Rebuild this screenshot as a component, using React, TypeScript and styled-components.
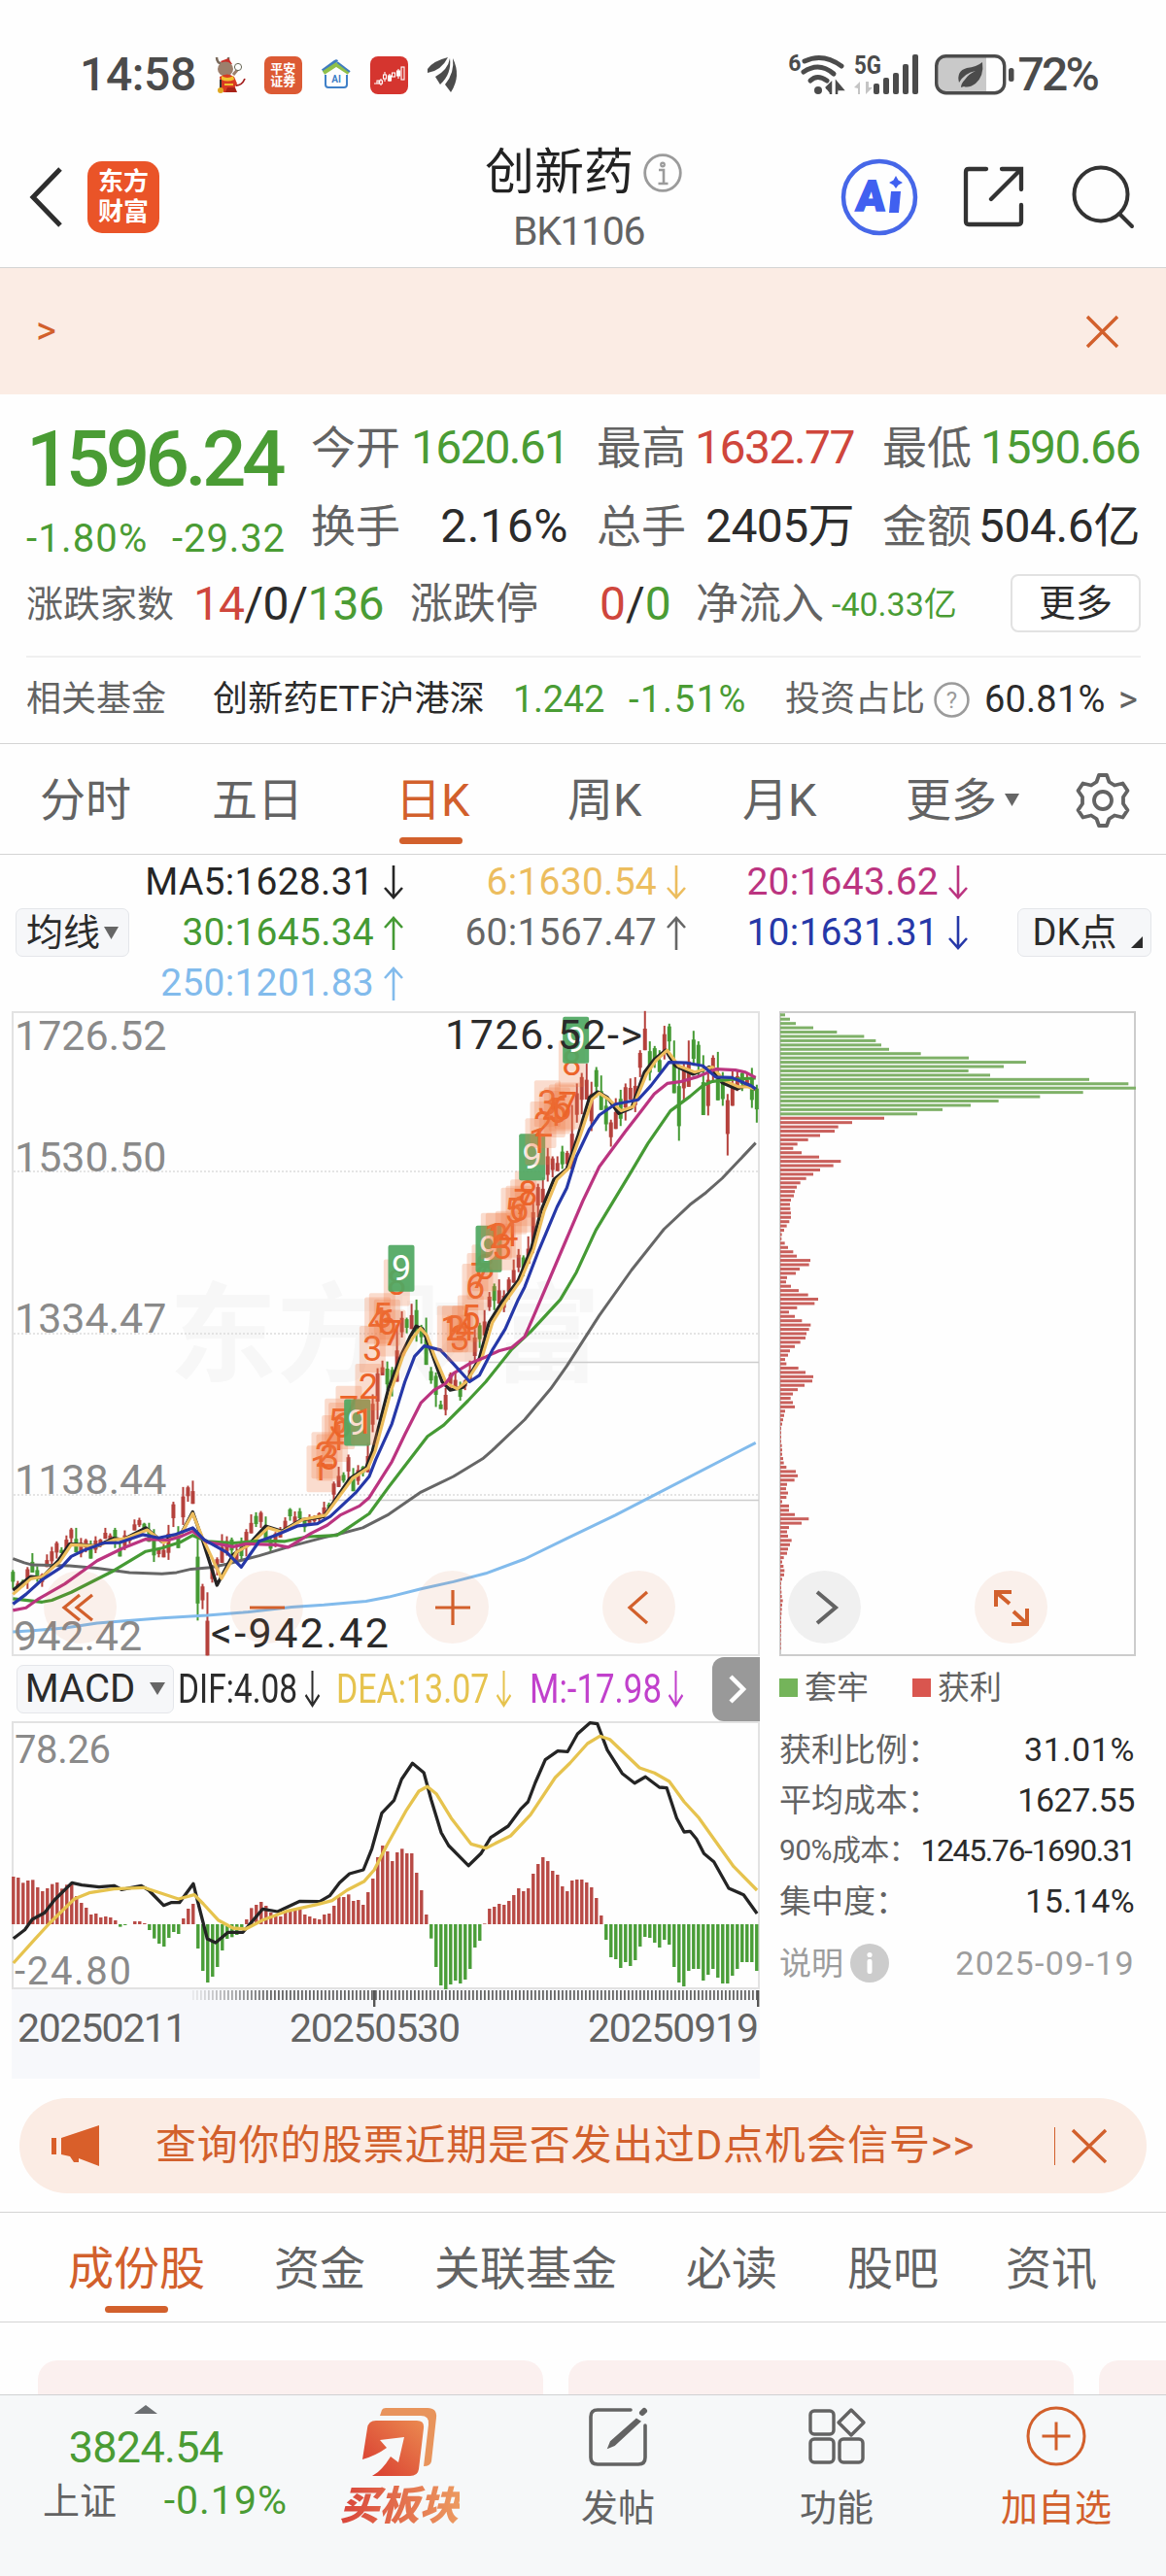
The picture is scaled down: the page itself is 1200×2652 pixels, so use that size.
import React from "react";
import styled, { createGlobalStyle } from "styled-components";

const ORANGE = "#d2602c";
const GREEN = "#4a9c34";
const RED = "#cf463c";
const DARK = "#2b2b2b";
const GRAY = "#636363";

const GlobalStyle = createGlobalStyle`
  * {
    box-sizing: border-box;
  }
  body {
    margin: 0;
    background: #fefefe;
    font-family: Roboto, "Noto Sans CJK SC", sans-serif;
    color: ${DARK};
  }
  svg {
    display: block;
    flex-shrink: 0;
    overflow: visible;
  }
`;

const Page = styled.div`
  width: 1200px;
  height: 2652px;
  overflow: hidden;
  display: flex;
  flex-direction: column;
`;

const Text = styled.span<{ $s: number; $c?: string; $ls?: number; $w?: number }>`
  display: block;
  white-space: nowrap;
  line-height: 1;
  font-size: ${({ $s }) => $s}px;
  color: ${({ $c }) => $c || DARK};
  letter-spacing: ${({ $ls }) => $ls || 0}px;
  font-weight: ${({ $w }) => $w || 400};
`;

/* ---------- status bar ---------- */

const StatusBar = styled.div`
  height: 154px;
  flex-shrink: 0;
  display: flex;
  justify-content: space-between;
  align-items: center;
  padding: 0 71px 0 82px;
`;

const StatusGroup = styled.div`
  display: flex;
  align-items: center;
`;

const AppIcons = styled.div`
  display: flex;
  align-items: center;
  gap: 19px;
  margin-left: 19px;
`;

const AppTile = styled.div`
  width: 39px;
  height: 39px;
  border-radius: 7px;
  background: #dc5a34;
  color: #fff;
  font-size: 13px;
  line-height: 13px;
  font-weight: 700;
  display: flex;
  align-items: center;
  justify-content: center;
  text-align: center;
`;

const WifiMark = styled.span`
  margin-bottom: 24px;
  font-size: 23px;
  line-height: 1;
  font-weight: 700;
  color: #4b4b4b;
`;

const SignalBox = styled.div`
  margin: 0 13px 0 9px;
`;

const Percent = styled(Text)`
  margin-left: 2px;
`;

/* ---------- header ---------- */

const Header = styled.header`
  height: 122px;
  flex-shrink: 0;
  display: grid;
  grid-template-columns: 60px 409px 367px 125px 114px 66px;
  grid-template-rows: 98px;
  align-items: center;
  padding: 0 0 0 30px;
  border-bottom: 1px solid #d4d4d4;
`;

const Logo = styled.div`
  width: 74px;
  height: 74px;
  border-radius: 15px;
  background: #ea5428;
  color: #fff;
  font-size: 26px;
  font-weight: 700;
  line-height: 31px;
  display: flex;
  align-items: center;
  justify-content: center;
  text-align: center;
`;

const TitleBox = styled.div`
  align-self: start;
  margin-top: -2px;
`;

const TitleRow = styled.div`
  display: flex;
  align-items: center;
  gap: 10px;
  margin-bottom: 15px;
`;

const Code = styled(Text)`
  padding-left: 29px;
`;

const Notice = styled.div`
  height: 130px;
  flex-shrink: 0;
  background: #fbece4;
  display: flex;
  align-items: center;
  justify-content: space-between;
  padding: 0 49px 0 37px;
`;

/* ---------- quote ---------- */

const Quote = styled.section`
  height: 360px;
  flex-shrink: 0;
  padding: 14px 26px 0 27px;
  border-bottom: 1px solid #d4d4d4;
`;

const QuoteTop = styled.div`
  display: flex;
  height: 163px;
`;

const PriceBox = styled.div`
  width: 293px;
  padding-top: 13px;
`;

const Changes = styled.div`
  display: flex;
  justify-content: space-between;
  width: 267px;
  margin-top: 22px;
`;

const StatGrid = styled.div`
  display: grid;
  grid-template-columns: repeat(3, 265px);
  grid-auto-rows: 81px;
  column-gap: 29px;
`;

const Stat = styled.div`
  display: flex;
  align-items: center;
  justify-content: space-between;
`;

const StatRow = styled.div`
  height: 92px;
  display: grid;
  grid-template-columns: 172px 223px 195px 99px 140px 184px 134px;
  align-items: center;
  padding-bottom: 14px;
`;

const Parts = styled.div<{ $gap?: number }>`
  display: flex;
  align-items: center;
  gap: ${({ $gap }) => $gap || 0}px;
`;

const MoreButton = styled.button`
  width: 134px;
  height: 60px;
  margin-top: -2px;
  padding: 0;
  border: 2px solid #e2e2e2;
  border-radius: 8px;
  background: #fff;
  display: flex;
  align-items: center;
  justify-content: center;
  font-family: inherit;
`;

const FundRow = styled.div`
  height: 88px;
  display: grid;
  grid-template-columns: 192px 309px 119px 161px 153px 52px 138px 22px;
  align-items: center;
  border-top: 2px solid #f0f0f0;
`;

/* ---------- period tabs ---------- */

const PeriodTabs = styled.nav`
  height: 114px;
  flex-shrink: 0;
  display: grid;
  grid-template-columns: 177px 189px 177px 180px 168px 174px 60px;
  align-items: center;
  padding: 2px 0 0 41px;
  border-bottom: 1px solid #d4d4d4;
`;

const Tab = styled.div<{ $active?: boolean; $bar?: number }>`
  position: relative;
  display: flex;
  align-items: center;
  gap: 8px;
  width: max-content;
  font-size: 47px;
  line-height: 1;
  white-space: nowrap;
  color: ${({ $active }) => ($active ? ORANGE : GRAY)};

  &::after {
    content: "";
    display: ${({ $active }) => ($active ? "block" : "none")};
    position: absolute;
    left: ${({ $bar }) => $bar || 0}px;
    top: 62px;
    width: 65px;
    height: 7px;
    border-radius: 4px;
    background: ${ORANGE};
  }
`;

/* ---------- moving averages ---------- */

const MaPanel = styled.div`
  height: 161px;
  flex-shrink: 0;
  display: flex;
  align-items: flex-start;
  padding: 2px 0 0 16px;
`;

const MaGrid = styled.div`
  display: grid;
  grid-template-columns: 283px 291px 290px;
  grid-auto-rows: 52px;
`;

const MaItem = styled.div`
  display: flex;
  align-items: center;
  justify-content: flex-end;
  gap: 9px;
`;

const Chip = styled.div<{ $w: number }>`
  position: relative;
  width: ${({ $w }) => $w}px;
  height: 50px;
  flex-shrink: 0;
  display: flex;
  align-items: center;
  justify-content: center;
  gap: 4px;
  border: 1px solid #e4e6ea;
  border-radius: 7px;
  background: #f6f7f9;
`;

const MaChip = styled(Chip)`
  margin-top: 53px;
`;

const DkChip = styled(MaChip)`
  margin-left: 50px;
  padding-right: 20px;
`;

const MacdChip = styled(Chip)`
  gap: 15px;
`;

const Corner = styled.i`
  position: absolute;
  right: 8px;
  bottom: 8px;
  border-left: 12px solid transparent;
  border-bottom: 12px solid ${DARK};
`;

/* ---------- charts ---------- */

const Charts = styled.section`
  height: 1100px;
  flex-shrink: 0;
  display: flex;
  padding-left: 12px;
`;

const LeftColumn = styled.div`
  width: 770px;
`;

const RightColumn = styled.div`
  width: 367px;
  margin-left: 20px;
`;

const Plot = styled.div<{ $h: number; $line: string }>`
  position: relative;
  height: ${({ $h }) => $h}px;
  border: 2px solid ${({ $line }) => $line};

  > svg {
    margin: -2px;
  }
`;

const RoundButton = styled.button<{ $x: number; $gray?: boolean }>`
  position: absolute;
  left: ${({ $x }) => $x}px;
  top: 574px;
  width: 75px;
  height: 75px;
  padding: 0;
  border: none;
  border-radius: 50%;
  background: ${({ $gray }) => ($gray ? "rgba(0,0,0,.055)" : "rgba(210,96,44,.09)")};
  display: flex;
  align-items: center;
  justify-content: center;
`;

const IndicatorRow = styled.div`
  height: 67px;
  display: grid;
  grid-template-columns: 166px 163px 199px 188px 49px;
  padding-left: 5px;
  align-items: center;
`;

const Indicator = styled.div`
  display: flex;
  align-items: center;
`;

/* condensed figures, so that the three values fit on one line */
const Squeeze = styled.div<{ $w: number; $k: number }>`
  width: ${({ $w }) => $w}px;

  > span {
    transform: scaleX(${({ $k }) => $k});
    transform-origin: left center;
  }
`;

const NextButton = styled.button`
  height: 66px;
  width: 49px;
  padding: 0;
  border: none;
  border-radius: 12px 0 0 12px;
  background: #999;
  display: flex;
  align-items: center;
  justify-content: center;
`;

const Axis = styled.div`
  height: 92px;
  background: #f7f8fb;
`;

const AxisLabels = styled.div`
  display: grid;
  grid-template-columns: 280px 307px auto;
  padding: 1px 0 0 6px;
`;

const Legend = styled.div`
  height: 64px;
  display: grid;
  grid-template-columns: 137px 137px;
  align-items: center;
`;

const LegendItem = styled.div<{ $c: string }>`
  display: flex;
  align-items: center;
  gap: 7px;

  &::before {
    content: "";
    width: 19px;
    height: 19px;
    background: ${({ $c }) => $c};
  }
`;

const CostList = styled.div`
  padding-top: 6px;
`;

const CostRow = styled.div<{ $h?: number }>`
  height: ${({ $h }) => $h || 52}px;
  width: 366px;
  display: flex;
  align-items: center;
  justify-content: space-between;
`;

/* ---------- lower part ---------- */

const Promo = styled.div`
  width: 1160px;
  height: 98px;
  flex-shrink: 0;
  margin: 19px 20px;
  border-radius: 49px;
  background: #fbece4;
  display: grid;
  grid-template-columns: 107px 925px 18px 40px;
  align-items: center;
  padding-left: 33px;
`;

const Separator = styled.i`
  width: 1px;
  height: 39px;
  background: ${ORANGE};
`;

const InfoTabs = styled.nav`
  height: 114px;
  flex-shrink: 0;
  display: grid;
  grid-template-columns: 212px 165px 259px 166px 163px 100px;
  align-items: center;
  padding: 2px 0 0 70px;
  border-top: 1px solid #d4d4d4;
  border-bottom: 1px solid #d4d4d4;
`;

const Cards = styled.div`
  height: 74px;
  flex-shrink: 0;
  overflow: hidden;
  display: flex;
  gap: 26px;
  padding: 39px 0 0 39px;
`;

const Card = styled.div`
  width: 520px;
  height: 80px;
  flex-shrink: 0;
  border-radius: 20px;
  background: #fbf0ef;
`;

const BottomBar = styled.footer`
  height: 187px;
  flex-shrink: 0;
  display: grid;
  grid-template-columns: 300px 224px 224px 226px 226px;
  background: #f6f8f9;
  border-top: 1px solid #cfd1d3;
`;

const IndexBox = styled.div`
  display: flex;
  flex-direction: column;
  align-items: center;
  gap: 12px;
  padding-top: 10px;
`;

const IndexRow = styled.div`
  width: 252px;
  margin: 0 0 0 40px;
  display: flex;
  justify-content: space-between;
  align-items: center;
`;

const Action = styled.div`
  display: flex;
  flex-direction: column;
  align-items: center;
  padding-top: 12px;
`;

const IconSlot = styled.div`
  height: 85px;
`;

const BuyLabel = styled.span`
  font-size: 41px;
  line-height: 42px;
  margin: -4px 2px 0 0;
  font-weight: 900;
  font-style: italic;
  background: linear-gradient(90deg, #d9443a, #ec9a60);
  -webkit-background-clip: text;
  color: transparent;
`;

/* ---------- chart data ---------- */

type Pt = [number, number];

const px = (v: number) => v / 3 - 12;
const py = (v: number) => v / 2.306 - 11;

const ma5: Pt[] = [
  [40, 1400], [95, 1368], [130, 1370], [180, 1330], [215, 1290], [300, 1295], [350, 1277], [380, 1280],
  [450, 1252], [500, 1285], [560, 1265], [595, 1214], [625, 1280], [670, 1388], [720, 1315], [770, 1290],
  [820, 1248], [870, 1260], [930, 1233], [1000, 1225], [1080, 1135], [1130, 1110], [1150, 1070], [1200, 920],
  [1240, 840], [1265, 800], [1285, 773], [1305, 780], [1330, 830], [1365, 905], [1390, 925], [1430, 918],
  [1480, 850], [1510, 765], [1550, 715], [1600, 665], [1640, 590], [1670, 500], [1710, 425], [1750, 400],
  [1785, 320], [1820, 230], [1845, 217], [1875, 230], [1910, 268], [1950, 255], [1990, 170], [2020, 140],
  [2055, 118], [2085, 155], [2140, 175], [2190, 158], [2230, 195], [2275, 210], [2310, 200], [2333, 212],
];
const ma6: Pt[] = [
  [40, 1410], [95, 1373], [130, 1368], [185, 1332], [220, 1292], [300, 1295], [355, 1280], [385, 1278],
  [455, 1257], [505, 1287], [560, 1265], [595, 1218], [625, 1275], [684, 1372], [730, 1310], [775, 1290],
  [828, 1252], [870, 1262], [935, 1232], [1005, 1222], [1088, 1135], [1136, 1110], [1158, 1070], [1206, 930],
  [1246, 840], [1275, 800], [1298, 778], [1318, 795], [1342, 845], [1378, 908], [1412, 922], [1440, 905],
  [1488, 848], [1520, 765], [1558, 718], [1607, 665], [1648, 590], [1680, 500], [1720, 425], [1756, 398],
  [1792, 320], [1828, 235], [1850, 220], [1880, 235], [1918, 262], [1955, 252], [1996, 175], [2026, 142],
  [2060, 118], [2095, 155], [2145, 170], [2200, 158], [2236, 190], [2280, 205], [2310, 205], [2333, 210],
];
const ma10: Pt[] = [
  [40, 1433], [80, 1410], [130, 1375], [190, 1345], [220, 1320], [260, 1305], [320, 1288], [370, 1287],
  [440, 1268], [490, 1276], [540, 1268], [595, 1252], [630, 1280], [700, 1310], [745, 1345], [800, 1284],
  [850, 1270], [920, 1247], [980, 1242], [1020, 1225], [1100, 1167], [1140, 1130], [1160, 1090], [1210, 1005],
  [1250, 905], [1280, 845], [1310, 820], [1360, 830], [1400, 863], [1450, 905], [1480, 890], [1520, 830],
  [1560, 780], [1600, 710], [1620, 680], [1660, 600], [1720, 490], [1750, 445], [1780, 370], [1820, 305],
  [1850, 272], [1900, 246], [1970, 236], [2010, 202], [2065, 147], [2120, 148], [2170, 155], [2210, 182],
  [2260, 183], [2320, 203], [2333, 210],
];
const ma20: Pt[] = [
  [40, 1448], [80, 1442], [120, 1420], [200, 1385], [300, 1330], [380, 1300], [450, 1279], [520, 1281],
  [560, 1272], [595, 1260], [640, 1286], [720, 1297], [760, 1290], [850, 1292], [890, 1298], [960, 1265],
  [1010, 1246], [1050, 1222], [1110, 1200], [1140, 1180], [1210, 1095], [1250, 1030], [1300, 955], [1340, 925],
  [1375, 910], [1400, 885], [1450, 862], [1500, 846], [1540, 832], [1580, 824], [1620, 798], [1650, 745],
  [1700, 655], [1750, 565], [1800, 475], [1850, 395], [1930, 312], [1970, 272], [2020, 222], [2060, 197],
  [2100, 193], [2150, 182], [2210, 163], [2270, 165], [2300, 170], [2333, 183],
];
const ma30: Pt[] = [
  [40, 1420], [130, 1428], [160, 1424], [220, 1405], [350, 1354], [450, 1308], [500, 1300], [560, 1285],
  [595, 1270], [640, 1284], [720, 1288], [800, 1283], [880, 1284], [950, 1273], [1040, 1270], [1060, 1260],
  [1140, 1218], [1200, 1155], [1240, 1115], [1320, 1035], [1370, 1008], [1445, 950], [1500, 905], [1580, 828],
  [1640, 785], [1730, 710], [1780, 645], [1840, 545], [1950, 405], [2000, 340], [2070, 262], [2130, 228],
  [2170, 202], [2200, 192], [2250, 188], [2333, 184],
];
const ma60: Pt[] = [
  [40, 1325], [75, 1335], [100, 1340], [215, 1342], [300, 1348], [400, 1358], [500, 1361], [545, 1358],
  [590, 1350], [650, 1346], [700, 1338], [800, 1318], [900, 1295], [1000, 1275], [1050, 1266], [1120, 1252],
  [1200, 1220], [1300, 1167], [1400, 1130], [1490, 1088], [1520, 1068], [1620, 995], [1700, 922], [1750, 868],
  [1850, 748], [1950, 640], [2050, 543], [2130, 485], [2180, 456], [2230, 422], [2333, 338],
];
const ma250: Pt[] = [
  [40, 1499], [100, 1496], [200, 1490], [300, 1478], [500, 1466], [640, 1460], [750, 1453], [900, 1440],
  [1000, 1435], [1130, 1426], [1200, 1416], [1300, 1397], [1400, 1380], [1500, 1360], [1620, 1326],
  [1750, 1277], [1900, 1222], [2333, 1050],
];

const maLines: { pts: Pt[]; color: string; w: number }[] = [
  { pts: ma250, color: "#82bbec", w: 3 },
  { pts: ma60, color: "#666", w: 3 },
  { pts: ma5, color: "#242424", w: 3.4 },
  { pts: ma6, color: "#edbd5c", w: 3.2 },
  { pts: ma30, color: "#459a34", w: 3.2 },
  { pts: ma20, color: "#bb3480", w: 3.2 },
  { pts: ma10, color: "#2638a8", w: 3.2 },
];

// high,low per day; a leading "g" marks a falling day
const candles =
  "g1352,1395 1378,1392 g1375,1393 1345,1397 g1312,1358 g1343,1380 1360,1392 1315,1345 1297,1340 1284,1325 g1298,1312 1270,1310 1252,1290 g1252,1310 1276,1322 1278,1310 g1282,1325 1272,1312 1278,1298 1252,1278 1265,1285 g1252,1300 g1285,1320 1258,1305 1270,1290 1232,1258 1228,1250 g1240,1262 g1240,1285 g1255,1333 1300,1322 1290,1322 1245,1328 1190,1250 g1248,1300 1155,1245 1152,1190 1140,1195 g1270,1472 1385,1445 1405,1555 1340,1382 1322,1365 1267,1335 1272,1318 g1275,1322 1290,1330 g1275,1330 1255,1320 1220,1265 g1215,1250 1212,1252 g1225,1280 g1275,1308 1262,1298 1250,1275 1227,1260 g1205,1235 1213,1240 g1205,1235 g1230,1262 1220,1240 1222,1240 1215,1240 1190,1220 g1192,1210 1142,1190 1107,1155 g1120,1145 1078,1140 g1110,1165 1103,1150 g1105,1130 1050,1120 935,1025 873,995 855,890 g857,925 g870,940 770,905 738,800 g753,790 720,780 g710,810 g770,815 g753,865 g870,910 g883,965 g950,970 920,985 883,925 885,920 g905,950 900,925 855,905 780,860 g765,825 735,795 692,737 g672,735 662,720 688,740 657,710 615,670 590,645 g605,655 560,625 470,600 435,515 420,480 350,430 370,420 370,405 g345,400 357,405 248,400 197,290 172,270 150,235 193,310 g158,230 g178,260 g230,310 283,347 232,305 g212,298 197,285 185,235 182,265 118,182 25,118 g97,190 g108,160 g118,170 60,140 g55,120 g95,220 g160,333 150,240 95,205 g72,155 g97,180 g130,272 160,273 130,190 g122,237 g170,250 222,368 165,250 168,215 g168,215 175,205 g160,255 g200,290".split(
    " "
  );

// consecutive-day counters above the candles
const counters: [number, number, number][] = [
  [1, 987, 1112], [2, 1002, 1080], [3, 1017, 1085], [4, 1034, 1040], [5, 1043, 1000], [6, 1055, 1010], [7, 1077, 970],
  [9, 1103, 1002], [1, 1124, 1000], [2, 1137, 918], [3, 1150, 828], [4, 1166, 760], [5, 1180, 750], [6, 1195, 765],
  [7, 1212, 790], [8, 1225, 670], [9, 1239, 636], [1, 1390, 780], [2, 1405, 780], [3, 1420, 802], [4, 1436, 780],
  [5, 1453, 755], [6, 1467, 680], [7, 1482, 655], [8, 1497, 635], [9, 1509, 590], [1, 1525, 560], [2, 1540, 560],
  [3, 1552, 585], [4, 1570, 555], [5, 1587, 500], [6, 1602, 495], [7, 1616, 480], [8, 1630, 460], [9, 1643, 372],
  [1, 1662, 335], [2, 1677, 295], [3, 1690, 245], [4, 1705, 270], [5, 1720, 262], [6, 1735, 255], [7, 1753, 250],
  [8, 1765, 150], [9, 1778, 94],
];

const chips = [
  15, 30, 48, 102, 175, 259, 295, 312, 336, 434, 582, 759, 690, 581, 648, 954, 1075, 1098, 935, 802, 674, 588, 501,
  423, 321, 222, 179, 168, 123, 86, 53, 40, 66, 120, 187, 164, 123, 102, 80, 62, 51, 45, 42, 33, 30, 31, 33, 33, 28,
  20, 12, 5, 4, 14, 24, 40, 51, 93, 89, 60, 48, 21, 18, 33, 57, 86, 117, 106, 52, 27, 45, 67, 94, 89, 81, 78, 62, 45,
  30, 24, 15, 19, 56, 78, 102, 99, 75, 54, 39, 32, 39, 45, 15, 12, 9, 6, 3, 3, 3, 3, 5, 6, 6, 9, 11, 19, 48, 54, 44,
  21, 18, 24, 19, 6, 27, 27, 45, 88, 66, 27, 21, 24, 35, 30, 24, 21, 11, 6, 10, 13, 12, 6, 3, 3, 4, 5, 8, 6, 5, 4, 3,
  3, 3, 3, 2, 2, 2, 2,
];

const macdBars = [
  147, 144, 128, 135, 137, 114, 102, 111, 124, 129, 110, 122, 125, 87, 66, 51, 30, 33, 21, 24, 21, 12, -8, -3, 0, 9, 9,
  3, -18, -44, -60, -69, -42, -24, -30, 18, 48, 63, -75, -144, -180, -162, -132, -81, -45, -40, -33, -15, 15, 50, 60,
  69, 57, 36, 24, 24, 36, 40, 45, 45, 30, 24, 18, 15, 30, 33, 57, 84, 84, 92, 72, 75, 60, 99, 141, 207, 243, 225, 195,
  222, 233, 219, 219, 159, 105, 30, -44, -132, -189, -201, -186, -174, -183, -171, -138, -72, -51, 2, 48, 54, 63, 60,
  72, 90, 111, 102, 111, 156, 186, 207, 195, 165, 153, 117, 102, 135, 138, 138, 129, 114, 81, 27, -48, -102, -108,
  -135, -117, -129, -111, -69, -39, -42, -57, -72, -48, -63, -132, -180, -192, -144, -138, -138, -174, -156, -138,
  -165, -183, -183, -159, -138, -117, -117, -117, -144,
];

const dif: Pt[] = [
  [27, 917], [50, 890], [65, 858], [90, 838], [110, 798], [145, 745], [165, 752], [200, 758], [230, 754], [245, 766],
  [285, 754], [300, 768], [330, 815], [345, 806], [362, 806], [390, 748], [400, 810], [418, 918], [435, 930],
  [460, 898], [490, 898], [530, 826], [560, 834], [605, 802], [645, 803], [665, 785], [685, 745], [705, 717],
  [733, 705], [750, 640], [770, 530], [795, 490], [810, 425], [832, 376], [855, 405], [870, 490], [890, 590],
  [905, 630], [945, 692], [970, 655], [990, 605], [1025, 570], [1050, 518], [1065, 495], [1080, 435], [1100, 365],
  [1125, 338], [1145, 340], [1165, 285], [1190, 251], [1205, 254], [1225, 335], [1255, 407], [1280, 437],
  [1302, 418], [1330, 450], [1345, 452], [1365, 545], [1380, 588], [1392, 586], [1405, 610], [1420, 655],
  [1440, 680], [1470, 762], [1500, 782], [1527, 840],
];
const dea: Pt[] = [
  [27, 993], [70, 920], [100, 870], [150, 795], [180, 776], [230, 764], [290, 760], [320, 775], [360, 795],
  [392, 782], [410, 810], [440, 860], [470, 885], [495, 888], [530, 860], [580, 832], [640, 812], [670, 800],
  [700, 768], [735, 740], [755, 705], [780, 630], [820, 520], [845, 462], [862, 448], [880, 470], [910, 545],
  [950, 625], [980, 638], [1030, 600], [1070, 535], [1120, 420], [1150, 375], [1185, 315], [1210, 292],
  [1230, 302], [1290, 390], [1320, 406], [1350, 432], [1380, 495], [1410, 545], [1440, 610], [1480, 695],
  [1527, 768],
];

const mx = (v: number) => v / 1.96 - 12;
const my = (v: number) => v / 3 - 82;
const toPoints = (pts: Pt[], fx: (v: number) => number, fy: (v: number) => number) =>
  pts.map(([x, y]) => `${fx(x).toFixed(1)},${fy(y).toFixed(1)}`).join(" ");

const CandleChart = () => (
  <svg width="770" height="664" fontFamily="Roboto, 'Noto Sans CJK SC', sans-serif">
    <text x="162" y="373" fontSize="111" fontWeight="700" fill="#f7f7f7">
      东方财富
    </text>
    {[165, 332, 498].map((y) => (
      <line key={y} x1="2" x2="768" y1={y} y2={y} stroke="#dcdcdc" strokeWidth="1.5" strokeDasharray="2 2" />
    ))}
    <line x1="488" x2="769" y1="361.5" y2="361.5" stroke="#ccc" strokeWidth="1.5" />
    <line x1="327" x2="769" y1="503.5" y2="503.5" stroke="#ccc" strokeWidth="1.5" />
    {candles.map((c, i) => {
      const down = c[0] === "g";
      const [hi, lo] = (down ? c.slice(1) : c).split(",").map(Number);
      const x = px(40 + i * 15.01);
      const top = py(hi);
      const h = py(lo) - top;
      const bodyTop = top + h * (i % 3 === 0 ? 0.1 : i % 3 === 1 ? 0.45 : 0.25);
      return (
        <g key={i} fill={down ? "#459a34" : "#b5413c"}>
          <rect x={x - 1} y={top} width="2" height={h} />
          <rect x={x - 2} y={bodyTop} width="4" height={h * 0.55} />
        </g>
      );
    })}
    {maLines.map((l) => (
      <polyline
        key={l.color}
        points={toPoints(l.pts, px, py)}
        fill="none"
        stroke={l.color}
        strokeWidth={l.w}
        strokeLinejoin="round"
      />
    ))}
    {counters.map(([n, x, y], i) => (
      <g key={i}>
        <rect
          x={px(x) - 13.5}
          y={py(y) - 24}
          width="27"
          height="48"
          rx="2"
          fill={n === 9 ? "#50a862" : "#f07a45"}
          opacity={n === 9 ? 0.93 : 0.26}
        />
        <text x={px(x)} y={py(y) + 12} fontSize="36" textAnchor="middle" fill={n === 9 ? "#fff" : "#ec6329"}>
          {n}
        </text>
      </g>
    ))}
    <g fontSize="43" fill="#8a8a8a">
      <text x="3" y="40">1726.52</text>
      <text x="3" y="165">1530.50</text>
      <text x="3" y="331">1334.47</text>
      <text x="3" y="497">1138.44</text>
      <text x="2" y="658">942.42</text>
    </g>
    <g fontSize="43" fill={DARK}>
      <text x="446" y="39" textLength="203">1726.52-&gt;</text>
      <text x="205" y="655" textLength="183">&lt;-942.42</text>
    </g>
  </svg>
);

const ChipChart = () => (
  <svg width="367" height="664">
    {chips.map((v, i) => (
      <rect key={i} x="1" y={2.3 + i * 4.435} width={v / 3} height="3" fill={i < 24 ? "#7fb168" : "#c9605c"} />
    ))}
  </svg>
);

const MacdChart = () => (
  <svg width="770" height="276" fontFamily="Roboto, sans-serif">
    <g fontSize="40" fill="#8a8a8a">
      <text x="3" y="43" textLength="99">78.26</text>
      <text x="3" y="271" textLength="120">-24.80</text>
    </g>
    {macdBars.map((v, i) => (
      <rect
        key={i}
        x={mx(27 + i * 9.8) - 1.7}
        y={v > 0 ? 209 - v / 3 : 209}
        width="3.4"
        height={Math.abs(v) / 3}
        fill={v > 0 ? "#b84a45" : "#4a9e38"}
      />
    ))}
    <polyline points={toPoints(dif, mx, my)} fill="none" stroke="#242424" strokeWidth="3.3" strokeLinejoin="round" />
    <polyline points={toPoints(dea, mx, my)} fill="none" stroke="#e6c34e" strokeWidth="3.3" strokeLinejoin="round" />
  </svg>
);

const Ruler = () => (
  <svg width="770" height="19">
    {Array.from({ length: 146 }, (_, i) => (
      <rect
        key={i}
        x={186 + i * 4}
        y="1"
        width="1.8"
        height="10"
        fill="#666"
        opacity={Math.min(1, 0.1 + i / 22)}
      />
    ))}
    <rect x="372" y="1" width="2.4" height="17" fill="#555" />
    <rect x="767" y="1" width="2.4" height="17" fill="#555" />
  </svg>
);

/* ---------- icons ---------- */

const Arrow = ({ up, color, w = 22, h = 35 }: { up?: boolean; color: string; w?: number; h?: number }) => (
  <svg width={w} height={h} viewBox="0 0 22 35" preserveAspectRatio="none" fill="none" stroke={color} strokeWidth="2.6">
    <path d={up ? "M11 35V2M2 12L11 2L20 12" : "M11 0V33M2 23L11 33L20 23"} />
  </svg>
);

const Triangle = ({ w = 15, h = 13 }: { w?: number; h?: number }) => (
  <svg width={w} height={h} viewBox="0 0 10 10" preserveAspectRatio="none">
    <path d="M0 0H10L5 10Z" fill="#666" />
  </svg>
);

const Cross = ({ w, h }: { w: number; h: number }) => (
  <svg width={w} height={h} fill="none" stroke={ORANGE} strokeWidth="3.4">
    <path d={`M1 1L${w - 1} ${h - 1}M${w - 1} 1L1 ${h - 1}`} />
  </svg>
);

const Mascot = () => (
  <svg width="32" height="40" viewBox="0 0 32 40">
    <path d="M2 2q0 6 6 7M14 2q1 5-4 6" stroke="#7a6a5c" strokeWidth="2.5" fill="none" />
    <path d="M6 6l8-3 4 6-8 3z" fill="#c9302a" />
    <ellipse cx="11" cy="14" rx="8" ry="7.5" fill="#9c7f6c" />
    <path d="M5 22q8-5 15 0l3 7-5 9H9l-3-6z" fill="#d83a22" />
    <path d="M7 21q6 4 12 0l1 4q-7 3-13 0zM10 29h9v2h-9z" fill="#f2c230" />
    <path d="M19 20l5-6" stroke="#9c7f6c" strokeWidth="3" />
    <circle cx="24" cy="12" r="3.6" fill="#fff" stroke="#665" strokeWidth="1" />
    <path d="M22 31q6 0 9-7" stroke="#a32020" strokeWidth="1.8" fill="none" />
    <path d="M6 25v12" stroke="#333" strokeWidth="2" />
    <circle cx="6" cy="36" r="3" fill="#e0a820" />
    <path d="M11 38l2-5h8l2 5z" fill="#a82218" />
  </svg>
);

const House = () => (
  <svg width="32" height="30" viewBox="0 0 32 30">
    <path d="M2 11L15 1.5q1-.8 2 0" fill="none" stroke="#3f7cbf" strokeWidth="3.5" />
    <path d="M3 13L16 4.5L29 13" fill="none" stroke="#8fc04a" strokeWidth="4" />
    <path d="M17 2L30 12" fill="none" stroke="#3f7cbf" strokeWidth="2" />
    <path d="M5 15V25q0 3 3 3H24q3 0 3-3V15" fill="none" stroke="#3f80c8" strokeWidth="2" />
    <text x="16" y="23" fontSize="10" fontWeight="700" textAnchor="middle" fill="#3f80c8">
      AI
    </text>
  </svg>
);

const MiniCandles = () => (
  <svg width="39" height="39" viewBox="0 0 39 39">
    <rect width="39" height="39" rx="8" fill="#d5352f" />
    <g stroke="#fff" strokeWidth="1.1" fill="none">
      <path d="M4 28h3v-3h2v3zM11 23v7M15 16v10M20 18v8M29 13v10" />
      <rect x="9.5" y="25" width="3" height="3" fill="#d5352f" />
      <rect x="13.5" y="19" width="3" height="4" fill="#d5352f" />
      <rect x="18.5" y="20" width="3" height="5" fill="#fff" />
      <rect x="22.5" y="17" width="3" height="4" />
      <rect x="27.5" y="15" width="3" height="5" fill="#fff" />
      <rect x="32" y="11" width="3" height="13" />
    </g>
  </svg>
);

const Feather = () => (
  <svg width="34" height="38" viewBox="0 0 34 38" fill="#4c4c4c">
    <path d="M22 1Q6 5 1 13V17Q15 15 22 1Z" />
    <path d="M24 2Q22 14 9 21L14 29Q26 18 24 2Z" />
    <path d="M27 2Q29 17 19 29L25 37Q36 20 27 2Z" />
  </svg>
);

const Wifi = () => (
  <svg width="46" height="42" viewBox="0 0 46 42" fill="none" stroke="#4b4b4b">
    <path d="M4 7Q23-2 42 12" strokeWidth="5" strokeLinecap="round" />
    <path d="M3 18Q19 7 34 20" strokeWidth="5" strokeLinecap="round" />
    <path d="M10 27Q17 20 27 27" strokeWidth="5" strokeLinecap="round" />
    <circle cx="18" cy="37" r="4" fill="#4b4b4b" stroke="none" />
    <path d="M26 35l5-5v11M37 41V29l6 7h-4" fill="#4b4b4b" strokeWidth="2.5" />
  </svg>
);

const Signal = () => (
  <svg width="70" height="42" viewBox="0 0 70 42" fill="#4b4b4b">
    <text x="0" y="20" fontSize="26" fontWeight="700" textLength="28" lengthAdjust="spacingAndGlyphs">
      5G
    </text>
    <path d="M0 34l6-6v13H4V35zM12 28v13l7-7h-4v-6z" fill="#c4c4c4" />
    <rect x="20" y="30" width="6" height="11" rx="2" />
    <rect x="30" y="24" width="6" height="17" rx="2" />
    <rect x="40" y="19" width="6" height="22" rx="2" />
    <rect x="50" y="10" width="6" height="31" rx="2" />
    <rect x="60" y="0" width="6" height="41" rx="2" />
  </svg>
);

const Battery = () => (
  <svg width="83" height="42" viewBox="0 0 83 42">
    <path d="M10 2H53V39H10Q3 39 3 30V11Q3 2 10 2Z" fill="#c9c9c9" />
    <rect x="1.7" y="1.7" width="70" height="38" rx="10" fill="none" stroke="#4b4b4b" strokeWidth="3.4" />
    <rect x="76" y="14" width="5.5" height="14" rx="2.5" fill="#4b4b4b" />
    <path d="M49 8Q51 22 42 30Q35 35 30 33L27 34Q27 30 31 26Q35 20 42 17Q31 19 25 29Q22 17 33 14Q43 13 49 8Z" fill="#4b4b4b" />
  </svg>
);

const AiIcon = () => (
  <svg width="80" height="80" viewBox="0 0 80 80">
    <circle cx="39" cy="40" r="37" fill="none" stroke="#4667e8" strokeWidth="4.5" />
    <text
      x="15"
      y="54"
      fontSize="44"
      fontWeight="900"
      fill="#4060f0"
      stroke="#4060f0"
      strokeWidth="1.5"
      textLength="30"
      lengthAdjust="spacingAndGlyphs"
      transform="skewX(-4) translate(3 0)"
    >
      A
    </text>
    <path d="M51 34h10l-2 22H49z" fill="#4060f0" />
    <path d="M56 18l2.5 4.5L63 25l-4.5 2.5L56 31l-2.5-3.5L49 25l4.5-2.5z" fill="#4060f0" />
  </svg>
);

const ShareIcon = () => (
  <svg width="64" height="64" viewBox="0 0 64 64" fill="none" stroke="#333" strokeWidth="4.3" strokeLinecap="round">
    <path d="M24 3H6Q3 3 3 6V57Q3 60 6 60H57Q60 60 60 57V40M40 3H60V24M59 4L29 34" />
  </svg>
);

const SearchIcon = () => (
  <svg width="66" height="66" viewBox="0 0 66 66" fill="none" stroke="#333" strokeWidth="4" strokeLinecap="round">
    <circle cx="28" cy="30" r="27.5" />
    <path d="M47 50L60 63" />
  </svg>
);

const CircleMark = ({ size, mark, solid }: { size: number; mark: string; solid?: boolean }) => (
  <svg width={size} height={size} viewBox="0 0 40 40">
    <circle
      cx="20"
      cy="20"
      r={solid ? 20 : 18.3}
      fill={solid ? "#ccc" : "none"}
      stroke={solid ? "none" : "#9b9b9b"}
      strokeWidth="2.8"
    />
    {mark === "i" ? (
      <g fill={solid ? "#fff" : "none"} stroke={solid ? "#fff" : "#9b9b9b"} strokeWidth={solid ? 0 : 2.2}>
        <circle cx="20" cy="11.5" r={solid ? 2.6 : 1.8} />
        {solid ? <rect x="17.5" y="16" width="5" height="15" rx="2" /> : <path d="M16 17h5v13M15.5 31h10" strokeWidth="2.6" />}
      </g>
    ) : (
      <text x="20" y="29" fontSize="26" textAnchor="middle" fill="#9b9b9b">
        {mark}
      </text>
    )}
  </svg>
);

const Gear = () => (
  <svg width="58" height="58" viewBox="0 0 58 58" fill="none" stroke="#636363" strokeWidth="3.8" strokeLinejoin="round">
    <path d="M25 3H33L35.5 10L41 13.5L49.5 11.5L54.5 19L50 25.5V32.5L54.5 39L49.5 46.5L41 44.5L35.5 48L33 55H25L22.5 48L17 44.5L8.5 46.5L3.5 39L8 32.5V25.5L3.5 19L8.5 11.5L17 13.5L22.5 10Z" />
    <circle cx="29" cy="29" r="9" />
  </svg>
);

const Horn = () => (
  <svg width="50" height="44" viewBox="0 0 50 44" fill="#d95f2a">
    <path d="M0 14H5V31H0ZM10 14L49 1V43L28 35V39H23L19 33L10 31Z" />
  </svg>
);

const BuyIcon = () => (
  <svg width="78" height="72" viewBox="0 0 78 72">
    <defs>
      <linearGradient id="buy" x1="0" y1="1" x2="1" y2="0">
        <stop offset="0" stopColor="#d8392f" />
        <stop offset="1" stopColor="#eb8a50" />
      </linearGradient>
    </defs>
    <path d="M18 9L20 3Q21 1 24 1H67Q77 1 76 11L71 56Q70 61 63 61L68 18Q69 9 60 9Z" fill="#e8945c" />
    <path
      d="M5 22Q6 14 14 14H56Q64 14 63 22L58 64Q57 71 49 71H10Q20 66 29 51L37 57L43 31L18 34L25 42Q14 50 0 54Z"
      fill="url(#buy)"
    />
  </svg>
);

const PostIcon = () => (
  <svg width="62" height="62" viewBox="0 0 62 62" fill="none" stroke="#636363" strokeWidth="3.6" strokeLinecap="round">
    <path d="M44 3H10Q3 3 3 10V52Q3 59 10 59H52Q59 59 59 52V19" />
    <path d="M50 13L53 15L27 39L22 41L24 36Z" fill="#636363" strokeWidth="2.5" />
    <path d="M56 6L58 4" strokeWidth="6" />
  </svg>
);

const GridIcon = () => (
  <svg width="60" height="60" viewBox="0 0 60 60" fill="none" stroke="#636363" strokeWidth="3.4" strokeLinejoin="round">
    <rect x="3" y="4" width="24" height="24" rx="4" />
    <rect x="3" y="33" width="24" height="24" rx="4" />
    <rect x="33" y="33" width="24" height="24" rx="4" />
    <path d="M45 3L58 16L45 29L32 16Z" />
  </svg>
);

const AddIcon = () => (
  <svg width="62" height="62" viewBox="0 0 62 62" fill="none" stroke={ORANGE} strokeWidth="3">
    <circle cx="31" cy="30" r="29" />
    <path d="M31 15.5V44.5M16.5 30H45.5" />
  </svg>
);

const Stroke = ({ d, w = 40, h = 40, c = ORANGE, sw = 3.2 }: { d: string; w?: number; h?: number; c?: string; sw?: number }) => (
  <svg width={w} height={h} fill="none" stroke={c} strokeWidth={sw}>
    <path d={d} />
  </svg>
);

/* ---------- content ---------- */

const stats = [
  { label: "今开", value: "1620.61", color: GREEN, ls: -1.8 },
  { label: "最高", value: "1632.77", color: RED, ls: -1.5 },
  { label: "最低", value: "1590.66", color: GREEN, ls: -1.5 },
  { label: "换手", value: "2.16%", color: DARK, ls: 0.6 },
  { label: "总手", value: "2405万", color: DARK, ls: -0.6 },
  { label: "金额", value: "504.6亿", color: DARK, ls: -0.4 },
];

const averages = [
  { text: "MA5:1628.31", color: "#262626" },
  { text: "6:1630.54", color: "#ecbd5e" },
  { text: "20:1643.62", color: "#bb3480" },
  { text: "30:1645.34", color: "#459a34", up: true },
  { text: "60:1567.47", color: "#666", up: true },
  { text: "10:1631.31", color: "#2638a8" },
  { text: "250:1201.83", color: "#82bbec", up: true },
];

const costs = [
  { label: "获利比例：", value: "31.01%", ls: 0.6 },
  { label: "平均成本：", value: "1627.55", ls: -0.4 },
  { label: "90%成本：", value: "1245.76-1690.31", ls: -1.4, tight: true },
  { label: "集中度：", value: "15.14%", ls: 0.4 },
];

export default function App() {
  return (
    <Page>
      <GlobalStyle />
      <StatusBar>
        <StatusGroup>
          <Text $s={48} $c="#4b4b4b" $w={500} $ls={-0.4}>14:58</Text>
          <AppIcons>
            <Mascot />
            <AppTile>平安<br />证券</AppTile>
            <House />
            <MiniCandles />
            <Feather />
          </AppIcons>
        </StatusGroup>
        <StatusGroup>
          <WifiMark>6</WifiMark>
          <Wifi />
          <SignalBox>
            <Signal />
          </SignalBox>
          <Battery />
          <Percent $s={48} $c="#4b4b4b" $w={500} $ls={-2.8}>72%</Percent>
        </StatusGroup>
      </StatusBar>

      <Header>
        <Stroke d="M32 2L4 31L32 60" w={36} h={62} c="#2e2e2e" sw={5} />
        <Logo>东方<br />财富</Logo>
        <TitleBox>
          <TitleRow>
            <Text $s={51} $c="#222">创新药</Text>
            <CircleMark size={40} mark="i" />
          </TitleRow>
          <Code $s={41} $c={GRAY} $ls={-1.4}>BK1106</Code>
        </TitleBox>
        <AiIcon />
        <ShareIcon />
        <SearchIcon />
      </Header>

      <Notice>
        <Text $s={40} $c={ORANGE}>&gt;</Text>
        <Cross w={33} h={33} />
      </Notice>

      <Quote>
        <QuoteTop>
          <PriceBox>
            <Text $s={80} $c={GREEN} $w={500} $ls={-4.6}>1596.24</Text>
            <Changes>
              <Text $s={40} $c={GREEN} $ls={1.2}>-1.80%</Text>
              <Text $s={40} $c={GREEN} $ls={0.9}>-29.32</Text>
            </Changes>
          </PriceBox>
          <StatGrid>
            {stats.map((s) => (
              <Stat key={s.label}>
                <Text $s={46} $c={GRAY}>{s.label}</Text>
                <Text $s={48} $c={s.color} $ls={s.ls}>{s.value}</Text>
              </Stat>
            ))}
          </StatGrid>
        </QuoteTop>
        <StatRow>
          <Text $s={38} $c={GRAY}>涨跌家数</Text>
          <Parts>
            <Text $s={48} $c={RED} $ls={-0.9}>14</Text>
            <Text $s={48} $ls={-0.4}>/0/</Text>
            <Text $s={48} $c={GREEN} $ls={-1}>136</Text>
          </Parts>
          <Text $s={44} $c={GRAY}>涨跌停</Text>
          <Parts>
            <Text $s={48} $c={RED}>0</Text>
            <Text $s={48}>/</Text>
            <Text $s={48} $c={GREEN}>0</Text>
          </Parts>
          <Text $s={44} $c={GRAY}>净流入</Text>
          <Text $s={34} $c={GREEN}>-40.33亿</Text>
          <MoreButton>
            <Text $s={38}>更多</Text>
          </MoreButton>
        </StatRow>
        <FundRow>
          <Text $s={36} $c={GRAY}>相关基金</Text>
          <Text $s={36} $ls={0.2}>创新药ETF沪港深</Text>
          <Text $s={38} $c={GREEN} $ls={-0.3}>1.242</Text>
          <Text $s={38} $c={GREEN} $ls={1.6}>-1.51%</Text>
          <Text $s={36} $c={GRAY}>投资占比</Text>
          <CircleMark size={37} mark="?" />
          <Text $s={38} $ls={0.2}>60.81%</Text>
          <Text $s={38} $c={GRAY}>&gt;</Text>
        </FundRow>
      </Quote>

      <PeriodTabs>
        <Tab>分时</Tab>
        <Tab>五日</Tab>
        <Tab $active $bar={4}>日K</Tab>
        <Tab>周K</Tab>
        <Tab>月K</Tab>
        <Tab>更多 <Triangle /></Tab>
        <Gear />
      </PeriodTabs>

      <MaPanel>
        <MaChip $w={117}>
          <Text $s={38}>均线</Text>
          <Triangle />
        </MaChip>
        <MaGrid>
          {averages.map((a) => (
            <MaItem key={a.text}>
              <Text $s={39} $c={a.color} $ls={0.25}>{a.text}</Text>
              <Arrow up={a.up} color={a.color} />
            </MaItem>
          ))}
        </MaGrid>
        <DkChip $w={138}>
          <Text $s={38}>DK点</Text>
          <Corner />
        </DkChip>
      </MaPanel>

      <Charts>
        <LeftColumn>
          <Plot $h={664} $line="#e2e2e2">
            <CandleChart />
            <RoundButton $x={31}><Stroke d="M19 7L3 20L19 33M32 7L16 20L32 33" /></RoundButton>
            <RoundButton $x={223}><Stroke d="M2 20H38" /></RoundButton>
            <RoundButton $x={414}><Stroke d="M2 20H38M20 2V38" /></RoundButton>
            <RoundButton $x={606}><Stroke d="M28 4L10 20L28 36" /></RoundButton>
          </Plot>
          <IndicatorRow>
            <MacdChip $w={162}>
              <Text $s={40}>MACD</Text>
              <Triangle w={16} h={13} />
            </MacdChip>
            <Indicator>
              <Squeeze $w={130} $k={0.78}><Text $s={43}>DIF:4.08</Text></Squeeze>
              <Arrow color={DARK} w={17} h={38} />
            </Indicator>
            <Indicator>
              <Squeeze $w={164} $k={0.79}><Text $s={43} $c="#e6c34e">DEA:13.07</Text></Squeeze>
              <Arrow color="#e6c34e" w={17} h={38} />
            </Indicator>
            <Indicator>
              <Squeeze $w={142} $k={0.81}><Text $s={43} $c="#c140cc">M:-17.98</Text></Squeeze>
              <Arrow color="#c140cc" w={17} h={38} />
            </Indicator>
            <NextButton>
              <Stroke d="M5 3L18 16L5 29" w={22} h={32} c="#fff" sw={4.5} />
            </NextButton>
          </IndicatorRow>
          <Plot $h={276} $line="#e2e2e2">
            <MacdChart />
          </Plot>
          <Axis>
            <Ruler />
            <AxisLabels>
              <Text $s={41} $c={GRAY} $ls={-1.4}>20250211</Text>
              <Text $s={41} $c={GRAY} $ls={-1.2}>20250530</Text>
              <Text $s={41} $c={GRAY} $ls={-1.2}>20250919</Text>
            </AxisLabels>
          </Axis>
        </LeftColumn>

        <RightColumn>
          <Plot $h={664} $line="#ccc">
            <ChipChart />
            <RoundButton $x={7} $gray><Stroke d="M12 4L31 20L12 36" c="#636363" sw={4} /></RoundButton>
            <RoundButton $x={199}>
              <Stroke d="M4 19V4H20M4 4L18 16M20 37H36V21M36 37L22 24" sw={4} />
            </RoundButton>
          </Plot>
          <Legend>
            <LegendItem $c="#74b45a"><Text $s={33} $c={GRAY}>套牢</Text></LegendItem>
            <LegendItem $c="#d9564f"><Text $s={33} $c={GRAY}>获利</Text></LegendItem>
          </Legend>
          <CostList>
            {costs.map((c) => (
              <CostRow key={c.label}>
                <Text $s={c.tight ? 30 : 33} $c={GRAY} $ls={c.tight ? -0.6 : 0}>{c.label}</Text>
                <Text $s={c.tight ? 32 : 34} $ls={c.ls}>{c.value}</Text>
              </CostRow>
            ))}
            <CostRow $h={76}>
              <Parts $gap={7}>
                <Text $s={33} $c="#9d9d9d">说明</Text>
                <CircleMark size={40} mark="i" solid />
              </Parts>
              <Text $s={34} $c="#9d9d9d" $ls={1.3}>2025-09-19</Text>
            </CostRow>
          </CostList>
        </RightColumn>
      </Charts>

      <Promo>
        <Horn />
        <Text $s={42} $c={ORANGE} $ls={0.75}>查询你的股票近期是否发出过D点机会信号&gt;&gt;</Text>
        <Separator />
        <Cross w={36} h={35} />
      </Promo>

      <InfoTabs>
        <Tab $active $bar={38}>成份股</Tab>
        <Tab>资金</Tab>
        <Tab>关联基金</Tab>
        <Tab>必读</Tab>
        <Tab>股吧</Tab>
        <Tab>资讯</Tab>
      </InfoTabs>

      <Cards>
        <Card />
        <Card />
        <Card />
      </Cards>

      <BottomBar>
        <IndexBox>
          <svg width="24" height="9"><path d="M0 9L12 0L24 9Z" fill="#6c6f72" /></svg>
          <Text $s={45} $c={GREEN} $ls={-0.7}>3824.54</Text>
          <IndexRow>
            <Text $s={38} $c={GRAY}>上证</Text>
            <Text $s={41} $c={GREEN} $ls={1}>-0.19%</Text>
          </IndexRow>
        </IndexBox>
        <Action>
          <IconSlot><BuyIcon /></IconSlot>
          <BuyLabel>买板块</BuyLabel>
        </Action>
        <Action>
          <IconSlot><PostIcon /></IconSlot>
          <Text $s={38} $c={GRAY}>发帖</Text>
        </Action>
        <Action>
          <IconSlot><GridIcon /></IconSlot>
          <Text $s={38} $c={GRAY}>功能</Text>
        </Action>
        <Action>
          <IconSlot><AddIcon /></IconSlot>
          <Text $s={38} $c={ORANGE}>加自选</Text>
        </Action>
      </BottomBar>
    </Page>
  );
}
